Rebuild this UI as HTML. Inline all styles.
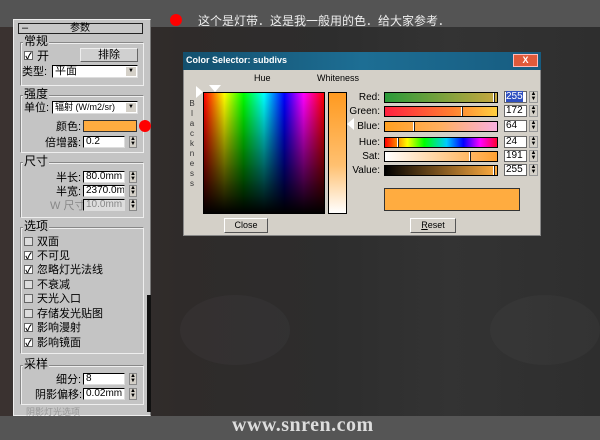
<!DOCTYPE html>
<html><head><meta charset="utf-8"><style>
*{margin:0;padding:0;box-sizing:border-box}
body{width:600px;height:440px;overflow:hidden;background:#333;font-family:"Liberation Sans","Noto Sans CJK SC",sans-serif;position:relative}
.a{position:absolute}
.t{position:absolute;font-size:11px;color:#000;white-space:nowrap;line-height:12px}
.grp{position:absolute;border:1px solid #888;border-right-color:#eee;border-bottom-color:#eee;box-shadow:inset 1px 1px 0 #eee}
.gl{position:absolute;background:#c4c4c4;font-size:12px;padding:0 1px;line-height:12px}
.fld{position:absolute;background:#fff;border:1px solid #000;border-right-color:#ddd;border-bottom-color:#ddd;font-size:10px;line-height:10px;padding-left:2px;overflow:hidden;white-space:nowrap}
.sp{position:absolute;width:8px;background:#d4d0c8;border:1px solid #888;font-size:6px;line-height:5px;text-align:center}
.cb{position:absolute;width:9px;height:9px;background:#fff;border:1px solid #666;font-size:9px;line-height:8px;text-align:center;font-weight:bold}
.sl{position:absolute;left:384px;width:114px;height:11px;border:1px solid #000}
.mk{position:absolute;top:0;width:2px;height:9px;background:#222;border-left:1px solid #fff}
.nb{position:absolute;left:504px;width:23px;height:12px;background:#fff;border:1px solid #666;font-size:10px;line-height:10px;padding-left:1px}
.ns{position:absolute;left:529px;width:9px;height:12px;border:1px solid #999;background:#d4d0c8;font-size:6px;line-height:5px;text-align:center}
.lb{position:absolute;font-size:10px;text-align:right;width:40px;left:340px;line-height:11px}
</style></head><body>
<div class="a" style="left:0;top:0;width:600px;height:27px;background:#545454"></div>
<div class="a" style="left:0;top:27px;width:600px;height:389px;background:linear-gradient(90deg,#3a3230 0%,#2f2b2a 30%,#2d2d2d 55%,#333 75%,#2e2e2e 100%)"></div>
<div class="a" style="left:180px;top:295px;width:110px;height:70px;background:rgba(90,90,100,.12);border-radius:50%"></div>
<div class="a" style="left:490px;top:295px;width:110px;height:70px;background:rgba(90,90,90,.12);border-radius:50%"></div>
<div class="a" style="left:0;top:416px;width:600px;height:24px;background:#555"></div>
<div class="a" style="left:232px;top:414px;font-family:'Liberation Serif',serif;font-size:20px;font-weight:bold;color:#ddd;letter-spacing:0.5px">www.snren.com</div>
<div class="a" style="left:170px;top:14px;width:12px;height:12px;border-radius:50%;background:#f00"></div>
<div class="a" style="left:198px;top:12px;font-size:12px;color:#eee;font-family:'Noto Sans CJK SC',sans-serif">这个是灯带．这是我一般用的色．给大家参考．</div>

<div class="a" style="left:13px;top:19px;width:138px;height:397px;background:#c4c4c4;border:1px solid #eee;border-right-color:#777"></div>
<div class="a" style="left:147px;top:295px;width:4px;height:117px;background:#111"></div>
<div class="a" style="left:18px;top:23px;width:125px;height:11px;border:1px solid #222;background:#c8c8c8"></div>
<div class="t" style="left:22px;top:22px">–</div>
<div class="t" style="left:70px;top:23px;font-size:10px">参数</div>

<div class="grp" style="left:20px;top:42px;width:124px;height:44px"></div>
<div class="gl" style="left:23px;top:35px">常规</div>
<div class="cb" style="left:24px;top:51px">✓</div><div class="t" style="left:37px;top:50px;font-size:12px">开</div>
<div class="a" style="left:80px;top:48px;width:58px;height:14px;background:#d0d0d0;border:1px solid #eee;border-right-color:#666;border-bottom-color:#666;font-size:11px;text-align:center;line-height:12px">排除</div>
<div class="t" style="left:22px;top:66px">类型:</div>
<div class="fld" style="left:52px;top:65px;width:86px;height:13px;font-size:11px;line-height:11px">平面<span style="position:absolute;right:1px;top:1px;width:10px;height:9px;background:#d4d0c8;font-size:6px;line-height:9px;text-align:center">▼</span></div>

<div class="grp" style="left:20px;top:95px;width:124px;height:58px"></div>
<div class="gl" style="left:23px;top:88px">强度</div>
<div class="t" style="left:24px;top:102px">单位:</div>
<div class="fld" style="left:52px;top:101px;width:86px;height:13px;font-size:9px">辐射 (W/m2/sr)<span style="position:absolute;right:1px;top:1px;width:10px;height:9px;background:#d4d0c8;font-size:6px;line-height:9px;text-align:center">▼</span></div>
<div class="t" style="left:56px;top:121px">颜色:</div>
<div class="a" style="left:83px;top:120px;width:54px;height:12px;background:#ffac40;border:1px solid #333"></div>
<div class="a" style="left:139px;top:120px;width:12px;height:12px;border-radius:50%;background:#f00"></div>
<div class="t" style="left:45px;top:137px">倍增器:</div>
<div class="fld" style="left:83px;top:136px;width:42px;height:12px">0.2</div><div class="sp" style="left:129px;top:136px;height:12px">▲<br>▼</div>

<div class="grp" style="left:20px;top:162px;width:124px;height:56px"></div>
<div class="gl" style="left:23px;top:155px">尺寸</div>
<div class="t" style="left:56px;top:172px">半长:</div>
<div class="fld" style="left:83px;top:171px;width:42px;height:12px">80.0mm</div><div class="sp" style="left:129px;top:171px;height:12px">▲<br>▼</div>
<div class="t" style="left:56px;top:186px">半宽:</div>
<div class="fld" style="left:83px;top:185px;width:42px;height:12px">2370.0mm</div><div class="sp" style="left:129px;top:185px;height:12px">▲<br>▼</div>
<div class="t" style="left:50px;top:200px;color:#888">W 尺寸</div>
<div class="fld" style="left:83px;top:199px;width:42px;height:12px;color:#888;background:#ddd">10.0mm</div><div class="sp" style="left:129px;top:199px;height:12px">▲<br>▼</div>

<div class="grp" style="left:20px;top:227px;width:124px;height:127px"></div>
<div class="gl" style="left:23px;top:220px">选项</div>
<div class="cb" style="left:24px;top:237px;background:#ddd"></div><div class="t" style="left:37px;top:236px">双面</div>
<div class="cb" style="left:24px;top:251px">✓</div><div class="t" style="left:37px;top:250px">不可见</div>
<div class="cb" style="left:24px;top:265px">✓</div><div class="t" style="left:37px;top:264px">忽略灯光法线</div>
<div class="cb" style="left:24px;top:280px;background:#ddd"></div><div class="t" style="left:37px;top:279px">不衰减</div>
<div class="cb" style="left:24px;top:294px;background:#ddd"></div><div class="t" style="left:37px;top:293px">天光入口</div>
<div class="cb" style="left:24px;top:309px;background:#ddd"></div><div class="t" style="left:37px;top:308px">存储发光贴图</div>
<div class="cb" style="left:24px;top:323px">✓</div><div class="t" style="left:37px;top:322px">影响漫射</div>
<div class="cb" style="left:24px;top:338px">✓</div><div class="t" style="left:37px;top:337px">影响镜面</div>

<div class="grp" style="left:20px;top:365px;width:124px;height:40px"></div>
<div class="gl" style="left:23px;top:358px">采样</div>
<div class="t" style="left:56px;top:374px">细分:</div>
<div class="fld" style="left:83px;top:373px;width:42px;height:12px">8</div><div class="sp" style="left:129px;top:373px;height:12px">▲<br>▼</div>
<div class="t" style="left:35px;top:389px">阴影偏移:</div>
<div class="fld" style="left:83px;top:388px;width:42px;height:12px">0.02mm</div><div class="sp" style="left:129px;top:388px;height:12px">▲<br>▼</div>
<div class="t" style="left:26px;top:406px;color:#999;font-size:9px">阴影灯光选项</div>

<div class="a" style="left:183px;top:52px;width:358px;height:184px;background:#d4d0c8;border:1px solid #888"></div>
<div class="a" style="left:183px;top:52px;width:358px;height:18px;background:linear-gradient(90deg,#14506e,#1d6e94 50%,#175c80)"></div>
<div class="a" style="left:186px;top:55px;font-size:9px;font-weight:bold;color:#fff">Color Selector: subdivs</div>
<div class="a" style="left:513px;top:54px;width:25px;height:13px;background:#e05a3a;border:1px solid #fbb;color:#fff;font-size:9px;font-weight:bold;text-align:center;line-height:11px">X</div>
<div class="a" style="left:254px;top:73px;font-size:9px">Hue</div>
<div class="a" style="left:317px;top:73px;font-size:9px">Whiteness</div>
<div class="a" style="left:189px;top:99px;width:6px;font-size:8px;line-height:10px;text-align:center;color:#333">B l a c k n e s s</div>
<div class="a" style="left:196px;top:86px;width:0;height:0;border-top:6px solid transparent;border-bottom:6px solid transparent;border-left:7px solid #fff"></div>
<div class="a" style="left:209px;top:85px;width:0;height:0;border-left:6px solid transparent;border-right:6px solid transparent;border-top:7px solid #fff"></div>
<div class="a" style="left:203px;top:92px;width:122px;height:122px;border:1px solid #000;background:linear-gradient(to bottom,rgba(0,0,0,0),#000),linear-gradient(90deg,#f00,#ff0 17%,#0f0 33%,#0ff 50%,#00f 67%,#f0f 83%,#f00)"></div>
<div class="a" style="left:328px;top:92px;width:19px;height:122px;border:1px solid #000;background:linear-gradient(#ff9a20,#ffc070 60%,#fff)"></div>
<div class="a" style="left:347px;top:118px;width:0;height:0;border-top:6px solid transparent;border-bottom:6px solid transparent;border-right:7px solid #fff"></div>

<div class="lb" style="top:92px">Red:</div><div class="sl" style="top:92px;background:linear-gradient(90deg,#2a9a3a,#c8a840)"><div class="mk" style="left:108px"></div></div>
<div class="nb" style="top:91px;background:#fff;color:#fff"><span style="background:#3050c0">255</span></div><div class="ns" style="top:91px">▲<br>▼</div>
<div class="lb" style="top:106px">Green:</div><div class="sl" style="top:106px;background:linear-gradient(90deg,#ff2040,#ff8030 60%,#ffd040)"><div class="mk" style="left:76px"></div></div>
<div class="nb" style="top:105px">172</div><div class="ns" style="top:105px">▲<br>▼</div>
<div class="lb" style="top:121px">Blue:</div><div class="sl" style="top:121px;background:linear-gradient(90deg,#ffa020,#ffb060 50%,#f8b0e0)"><div class="mk" style="left:28px"></div></div>
<div class="nb" style="top:120px">64</div><div class="ns" style="top:120px">▲<br>▼</div>
<div class="lb" style="top:137px">Hue:</div><div class="sl" style="top:137px;background:linear-gradient(90deg,#f00,#ff0 20%,#0f0 35%,#0cf 55%,#00f 70%,#f0f 85%,#f03)"><div class="mk" style="left:12px"></div></div>
<div class="nb" style="top:136px">24</div><div class="ns" style="top:136px">▲<br>▼</div>
<div class="lb" style="top:151px">Sat:</div><div class="sl" style="top:151px;background:linear-gradient(90deg,#fff,#ffa030)"><div class="mk" style="left:84px"></div></div>
<div class="nb" style="top:150px">191</div><div class="ns" style="top:150px">▲<br>▼</div>
<div class="lb" style="top:165px">Value:</div><div class="sl" style="top:165px;background:linear-gradient(90deg,#000,#ffac40)"><div class="mk" style="left:108px"></div></div>
<div class="nb" style="top:164px">255</div><div class="ns" style="top:164px">▲<br>▼</div>

<div class="a" style="left:384px;top:188px;width:136px;height:23px;background:#ffac40;border:1px solid #333"></div>
<div class="a" style="left:224px;top:218px;width:44px;height:15px;border:1px solid #fff;border-right-color:#555;border-bottom-color:#555;font-size:9px;text-align:center;line-height:13px">Close</div>
<div class="a" style="left:410px;top:218px;width:46px;height:15px;border:1px solid #fff;border-right-color:#555;border-bottom-color:#555;font-size:9px;text-align:center;line-height:13px"><u>R</u>eset</div>
</body></html>
